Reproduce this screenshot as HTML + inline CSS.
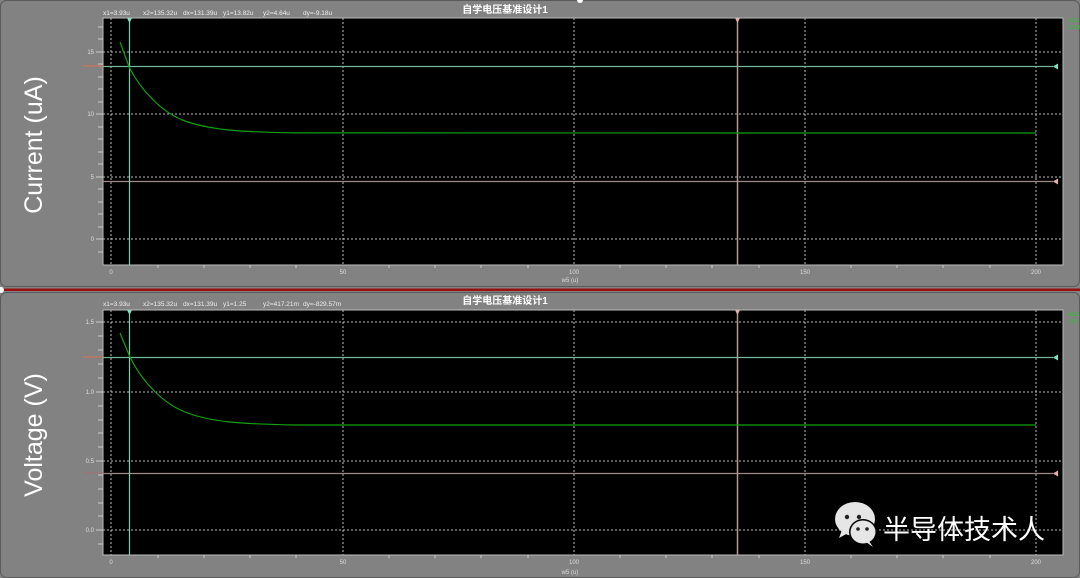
<!DOCTYPE html>
<html><head><meta charset="utf-8"><style>
html,body{margin:0;padding:0;background:#808080;}
svg{display:block}
text{font-family:"Liberation Sans","Noto Sans CJK SC",sans-serif;}
</style></head><body>
<svg width="1080" height="578" viewBox="0 0 1080 578" xmlns="http://www.w3.org/2000/svg">
<rect width="1080" height="578" fill="#828282"/>
<rect x="0.5" y="0.5" width="1079" height="286" rx="6" fill="none" stroke="#5a5a5a"/>
<rect x="0.5" y="292.5" width="1079" height="285" rx="6" fill="none" stroke="#5a5a5a"/>
<rect x="0" y="288.5" width="1080" height="2.5" fill="#9a1010"/>
<circle cx="1" cy="290" r="3" fill="#fff"/>
<circle cx="580" cy="0" r="3" fill="#fff"/>

<!-- TOP PANEL -->
<text x="505" y="13" fill="#fff" font-size="10" font-weight="bold" text-anchor="middle">自学电压基准设计1</text>
<g fill="#eee" font-size="6.5">
<text x="103" y="15">x1=3.93u</text><text x="143" y="15">x2=135.32u</text><text x="183" y="15">dx=131.39u</text><text x="223" y="15">y1=13.82u</text><text x="263" y="15">y2=4.64u</text><text x="303" y="15">dy=-9.18u</text>
</g>
<rect x="103" y="18" width="960" height="247" fill="#000" stroke="#bbb" stroke-width="1"/>
<g stroke="#bbb" stroke-dasharray="2,2" stroke-width="1">
<line x1="111" y1="18" x2="111" y2="265"/><line x1="343" y1="18" x2="343" y2="265"/><line x1="574" y1="18" x2="574" y2="265"/><line x1="805" y1="18" x2="805" y2="265"/><line x1="1036" y1="18" x2="1036" y2="265"/>
<line x1="103" y1="52" x2="1063" y2="52"/><line x1="103" y1="114" x2="1063" y2="114"/><line x1="103" y1="177" x2="1063" y2="177"/><line x1="103" y1="239" x2="1063" y2="239"/>
</g>
<g stroke="#ccc" stroke-width="1">
<line x1="96" y1="52" x2="103" y2="52"/><line x1="96" y1="114" x2="103" y2="114"/><line x1="96" y1="177" x2="103" y2="177"/><line x1="96" y1="239" x2="103" y2="239"/>
<line x1="98" y1="27" x2="103" y2="27"/><line x1="98" y1="39" x2="103" y2="39"/><line x1="98" y1="64" x2="103" y2="64"/><line x1="98" y1="77" x2="103" y2="77"/><line x1="98" y1="89" x2="103" y2="89"/><line x1="98" y1="102" x2="103" y2="102"/><line x1="98" y1="127" x2="103" y2="127"/><line x1="98" y1="139" x2="103" y2="139"/><line x1="98" y1="152" x2="103" y2="152"/><line x1="98" y1="164" x2="103" y2="164"/><line x1="98" y1="189" x2="103" y2="189"/><line x1="98" y1="202" x2="103" y2="202"/><line x1="98" y1="214" x2="103" y2="214"/><line x1="98" y1="227" x2="103" y2="227"/><line x1="98" y1="252" x2="103" y2="252"/>
<line x1="158" y1="265" x2="158" y2="268"/><line x1="204" y1="265" x2="204" y2="268"/><line x1="250" y1="265" x2="250" y2="268"/><line x1="296" y1="265" x2="296" y2="268"/><line x1="389" y1="265" x2="389" y2="268"/><line x1="435" y1="265" x2="435" y2="268"/><line x1="481" y1="265" x2="481" y2="268"/><line x1="528" y1="265" x2="528" y2="268"/><line x1="620" y1="265" x2="620" y2="268"/><line x1="666" y1="265" x2="666" y2="268"/><line x1="712" y1="265" x2="712" y2="268"/><line x1="759" y1="265" x2="759" y2="268"/><line x1="851" y1="265" x2="851" y2="268"/><line x1="897" y1="265" x2="897" y2="268"/><line x1="943" y1="265" x2="943" y2="268"/><line x1="990" y1="265" x2="990" y2="268"/>
</g>
<g fill="#ddd" font-size="6" text-anchor="end">
<text x="94" y="54">15</text><text x="94" y="116">10</text><text x="94" y="179">5</text><text x="94" y="241">0</text>
</g>
<g fill="#ddd" font-size="6" text-anchor="middle">
<text x="111" y="274">0</text><text x="343" y="274">50</text><text x="574" y="274">100</text><text x="805" y="274">150</text><text x="1036" y="274">200</text><text x="570" y="282">w5 (u)</text>
</g>
<text transform="translate(42,145) rotate(-90)" fill="#fff" font-size="25" text-anchor="middle">Current (uA)</text>
<line x1="83" y1="66" x2="103" y2="66" stroke="#e07050"/>
<line x1="103" y1="66.5" x2="1053" y2="66.5" stroke="#6fb898" stroke-width="1.2"/>
<line x1="103" y1="181.5" x2="1053" y2="181.5" stroke="#a08888" stroke-width="1.2"/>
<line x1="129.5" y1="18" x2="129.5" y2="265" stroke="#80d0b0" stroke-width="1.2"/>
<line x1="737.5" y1="18" x2="737.5" y2="265" stroke="#b09898" stroke-width="1.5"/>
<path d="M127 18 L132 18 L129.5 23 Z" fill="#80e0c0"/>
<path d="M735 18 L740 18 L737.5 23 Z" fill="#e0b0b0"/>
<path d="M1058 63.5 L1058 69.5 L1053 66.5 Z" fill="#80e0c0"/>
<path d="M1058 178.5 L1058 184.5 L1053 181.5 Z" fill="#e0b0b0"/>
<path d="M120 42 L129.5 68 C140 88 160 112 185 121 C210 130 240 132 296 132.9 L1036 133" fill="none" stroke="#10a010" stroke-width="1.2"/>
<g fill="#2c2" font-size="5"><text x="1068" y="22">A(2,1)</text><text x="1068" y="29">13.82</text></g>

<!-- BOTTOM PANEL -->
<text x="505" y="304" fill="#fff" font-size="10" font-weight="bold" text-anchor="middle">自学电压基准设计1</text>
<g fill="#eee" font-size="6.5">
<text x="103" y="306">x1=3.93u</text><text x="143" y="306">x2=135.32u</text><text x="183" y="306">dx=131.39u</text><text x="223" y="306">y1=1.25</text><text x="263" y="306">y2=417.21m</text><text x="303" y="306">dy=-829.57m</text>
</g>
<rect x="103" y="310" width="960" height="245" fill="#000" stroke="#bbb" stroke-width="1"/>
<g stroke="#bbb" stroke-dasharray="2,2" stroke-width="1">
<line x1="111" y1="310" x2="111" y2="555"/><line x1="343" y1="310" x2="343" y2="555"/><line x1="574" y1="310" x2="574" y2="555"/><line x1="805" y1="310" x2="805" y2="555"/><line x1="1036" y1="310" x2="1036" y2="555"/>
<line x1="103" y1="322" x2="1063" y2="322"/><line x1="103" y1="392" x2="1063" y2="392"/><line x1="103" y1="461" x2="1063" y2="461"/><line x1="103" y1="530" x2="1063" y2="530"/>
</g>
<g stroke="#ccc" stroke-width="1">
<line x1="96" y1="322" x2="103" y2="322"/><line x1="96" y1="392" x2="103" y2="392"/><line x1="96" y1="461" x2="103" y2="461"/><line x1="96" y1="530" x2="103" y2="530"/>
<line x1="98" y1="336" x2="103" y2="336"/><line x1="98" y1="350" x2="103" y2="350"/><line x1="98" y1="364" x2="103" y2="364"/><line x1="98" y1="378" x2="103" y2="378"/><line x1="98" y1="406" x2="103" y2="406"/><line x1="98" y1="420" x2="103" y2="420"/><line x1="98" y1="433" x2="103" y2="433"/><line x1="98" y1="447" x2="103" y2="447"/><line x1="98" y1="475" x2="103" y2="475"/><line x1="98" y1="489" x2="103" y2="489"/><line x1="98" y1="503" x2="103" y2="503"/><line x1="98" y1="516" x2="103" y2="516"/><line x1="98" y1="544" x2="103" y2="544"/>
<line x1="158" y1="555" x2="158" y2="558"/><line x1="204" y1="555" x2="204" y2="558"/><line x1="250" y1="555" x2="250" y2="558"/><line x1="296" y1="555" x2="296" y2="558"/><line x1="389" y1="555" x2="389" y2="558"/><line x1="435" y1="555" x2="435" y2="558"/><line x1="481" y1="555" x2="481" y2="558"/><line x1="528" y1="555" x2="528" y2="558"/><line x1="620" y1="555" x2="620" y2="558"/><line x1="666" y1="555" x2="666" y2="558"/><line x1="712" y1="555" x2="712" y2="558"/><line x1="759" y1="555" x2="759" y2="558"/><line x1="851" y1="555" x2="851" y2="558"/><line x1="897" y1="555" x2="897" y2="558"/><line x1="943" y1="555" x2="943" y2="558"/><line x1="990" y1="555" x2="990" y2="558"/>
</g>
<g fill="#ddd" font-size="6" text-anchor="end">
<text x="94" y="324">1.5</text><text x="94" y="394">1.0</text><text x="94" y="463">0.5</text><text x="94" y="532">0.0</text>
</g>
<g fill="#ddd" font-size="6" text-anchor="middle">
<text x="111" y="564">0</text><text x="343" y="564">50</text><text x="574" y="564">100</text><text x="805" y="564">150</text><text x="1036" y="564">200</text><text x="570" y="574">w5 (u)</text>
</g>
<text transform="translate(42,435) rotate(-90)" fill="#fff" font-size="25" text-anchor="middle">Voltage (V)</text>
<line x1="83" y1="357" x2="103" y2="357" stroke="#e07050"/>
<line x1="83" y1="473" x2="103" y2="473" stroke="#a07070"/>
<line x1="103" y1="357.5" x2="1053" y2="357.5" stroke="#6fb898" stroke-width="1.2"/>
<line x1="103" y1="473.5" x2="1053" y2="473.5" stroke="#a08888" stroke-width="1.2"/>
<line x1="129.5" y1="310" x2="129.5" y2="555" stroke="#80d0b0" stroke-width="1.2"/>
<line x1="737.5" y1="310" x2="737.5" y2="555" stroke="#b09898" stroke-width="1.5"/>
<path d="M127 310 L132 310 L129.5 315 Z" fill="#80e0c0"/>
<path d="M735 310 L740 310 L737.5 315 Z" fill="#e0b0b0"/>
<path d="M1058 354.5 L1058 360.5 L1053 357.5 Z" fill="#80e0c0"/>
<path d="M1058 470.5 L1058 476.5 L1053 473.5 Z" fill="#e0b0b0"/>
<path d="M120 333 L129.5 356 C140 378 160 402 185 412 C210 422 240 424 296 425 L1036 425" fill="none" stroke="#10a010" stroke-width="1.2"/>
<g fill="#2c2" font-size="5"><text x="1068" y="316">A(2,1)</text><text x="1068" y="323">1.25</text></g>

<!-- watermark -->
<g fill="#e6e6e6">
<ellipse cx="855" cy="519" rx="20" ry="17"/>
<path d="M842 530 L839 538 L850 532 Z"/>
<ellipse cx="863" cy="532" rx="14" ry="13" fill="#000"/>
<ellipse cx="863" cy="532" rx="12.5" ry="11.5"/>
<path d="M869 541 L873 547 L866 542 Z"/>
</g>
<g fill="#222"><circle cx="847" cy="517" r="2.2"/><circle cx="859" cy="517" r="2.2"/><circle cx="858" cy="529" r="1.8"/><circle cx="867" cy="529" r="1.8"/></g>
<text x="883" y="539" fill="#fff" font-size="27" font-family="'Noto Sans CJK SC',sans-serif">半导体技术人</text>
</svg>
</body></html>
